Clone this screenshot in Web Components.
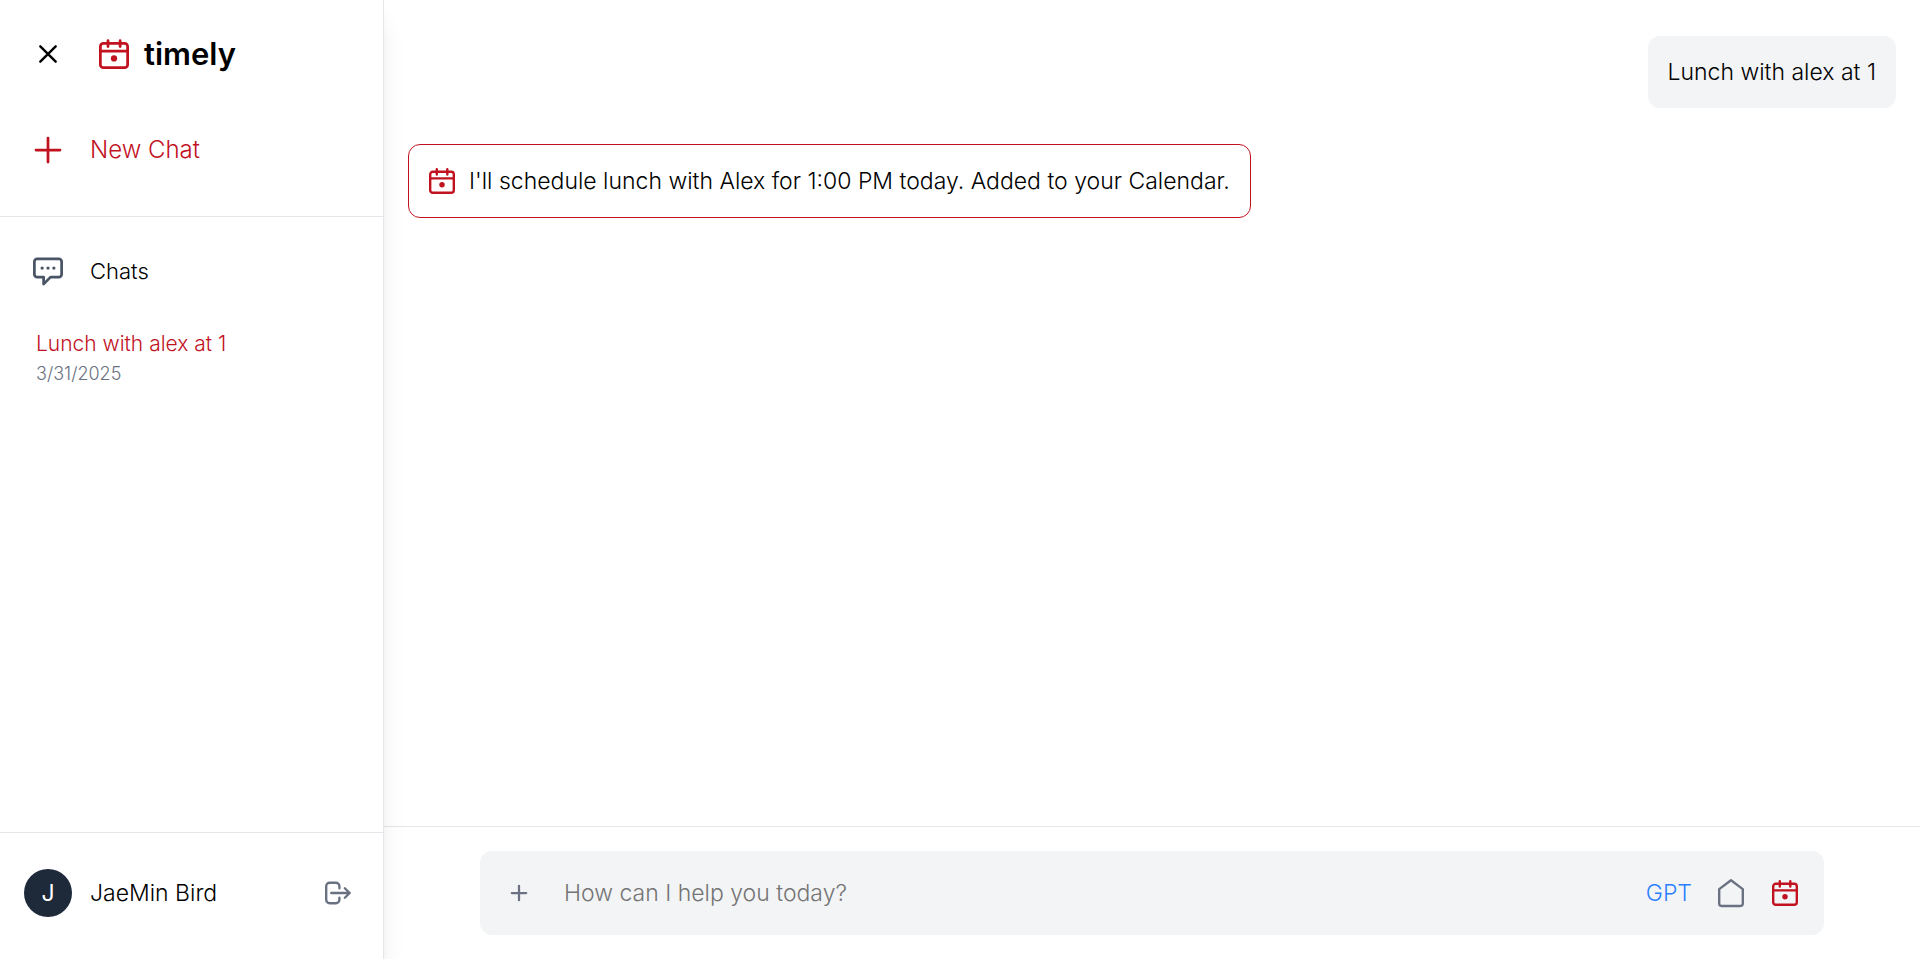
<!DOCTYPE html>
<html lang="en">
<head>
<meta charset="utf-8">
<title>timely</title>
<style>
  html, body { height: 100%; margin: 0; }
  body {
    --red: #c1121f;
    --line: #e5e7eb;
    --panel: #f3f4f6;
    --muted: #6a7282;
    font: 300 23px/36px Inter, "Liberation Sans", sans-serif;
    color: #000;
    background: #fff;
  }
</style>
</head>
<body>
<timely-app></timely-app>
<script>
const ICONS = {
  close: '<path d="M4.300 4.300 19.700 19.700M19.700 4.300 4.300 19.700"/>',
  plus: '<path d="M12 2.400V21.600M2.400 12H21.600"/>',
  calendar: '<rect x="1.100" y="3.500" width="21.800" height="19.400" rx="2.400"/><path d="M1.100 9.600H22.900M7.200 1.200V6M16.900 1.200V6"/><circle cx="12" cy="15.500" r="2.500" fill="currentColor" stroke="none"/>',
  chat: '<path d="M3.300 2.300H20.700A2.200 2.200 0 0 1 22.900 4.500V14.700A2.200 2.200 0 0 1 20.700 16.900H14L8.500 22.500V16.900H3.300A2.200 2.200 0 0 1 1.100 14.700V4.500A2.200 2.200 0 0 1 3.300 2.300Z"/><g fill="currentColor" stroke="none"><circle cx="7.300" cy="9.600" r="1.300"/><circle cx="12" cy="9.600" r="1.300"/><circle cx="16.700" cy="9.600" r="1.300"/></g>',
  logout: '<path d="M13.300 7.600V5.700A3.200 3.200 0 0 0 10.100 2.500H4.300A3.200 3.200 0 0 0 1.100 5.700V18.300A3.200 3.200 0 0 0 4.300 21.500H10.100A3.200 3.200 0 0 0 13.300 18.300V16.400M5.800 12H22.800M18.300 7.600 22.800 12 18.300 16.400"/>',
  home: '<path d="M1.100 8.400 12 .2 22.900 8.400V21.800A2.200 2.200 0 0 1 20.700 24H3.300A2.200 2.200 0 0 1 1.100 21.800Z"/>'
};

const define = (name, css, html) => customElements.define(name, class extends HTMLElement {
  constructor() {
    super();
    const template = document.createElement('template');
    template.innerHTML = `<style>*{box-sizing:border-box}button{font:inherit;color:inherit;background:none;border:0;padding:0;margin:0;cursor:pointer}a{color:inherit;text-decoration:none}${css}</style>${html}`;
    this.attachShadow({ mode: 'open' }).append(template.content.cloneNode(true));
  }
});

customElements.define('t-icon', class extends HTMLElement {
  connectedCallback() {
    const root = this.attachShadow({ mode: 'open' });
    const size = this.getAttribute('size');
    const stroke = this.getAttribute('stroke') || 2.2;
    root.innerHTML = `<style>:host{display:block;flex:none}svg{display:block;overflow:visible}</style>
      <svg aria-hidden="true" width="${size}" height="${size}" viewBox="0 0 24 24" fill="none" stroke="currentColor" stroke-width="${stroke}" stroke-linecap="round" stroke-linejoin="round">${ICONS[this.getAttribute('name')]}</svg>`;
  }
});

define('timely-header', `
  :host { display: flex; align-items: center; padding: 36px 36px 0; }
  button { width: 24px; display: grid; place-items: center; }
  a { display: flex; align-items: center; gap: 15px; margin-left: 39px; font-size: 31px; font-weight: 600; }
  a t-icon { color: var(--red); }
`, `<button aria-label="Close sidebar"><t-icon name="close" size="24" stroke="2.4"></t-icon></button>
    <a href="#"><t-icon name="calendar" size="30"></t-icon><span>timely</span></a>`);

define('new-chat', `
  :host { display: block; padding: 60px 30px 48px; border-bottom: 1px solid var(--line); color: var(--red); font-size: 24px; }
  button { display: flex; align-items: center; gap: 24px; }
  t-icon { padding: 0 3px; }
`, `<button><t-icon name="plus" size="30"></t-icon><span>New Chat</span></button>`);

define('chat-list', `
  :host { display: block; flex: 1; padding: 36px 33px; font-size: 22px; }
  h2 { display: flex; align-items: center; gap: 27px; margin: 0 0 40px; font: inherit; }
  t-icon { color: #4a5565; }
  ul { list-style: none; margin: 0; padding: 0 3px; }
`, `<h2><t-icon name="chat" size="30"></t-icon>Chats</h2><ul><slot></slot></ul>`);

define('chat-link', `
  :host { display: list-item; list-style: none; }
  a { display: block; color: var(--red); font-size: 21px; line-height: 30px; }
  time { display: block; color: var(--muted); font-size: 18px; line-height: 30px; }
`, `<a href="#"><slot></slot><time><slot name="date"></slot></time></a>`);

define('user-bar', `
  :host { display: flex; align-items: center; border-top: 1px solid var(--line); padding: 36px 32px 42px 24px; }
  .avatar { width: 48px; height: 48px; border-radius: 50%; background: #1e2939; color: #fff; display: grid; place-items: center; font-weight: 400; }
  .name { flex: 1; margin-left: 18px; }
  button { color: var(--muted); }
`, `<span class="avatar">J</span><span class="name"><slot></slot></span><button aria-label="Log out"><t-icon name="logout" size="26"></t-icon></button>`);

define('side-bar', `
  :host { display: flex; flex-direction: column; background: #fff; border-right: 1px solid var(--line); box-shadow: 0 20px 25px -5px #0000001a, 0 8px 10px -6px #0000001a; }
`, `<timely-header></timely-header><new-chat></new-chat>
    <chat-list><chat-link>Lunch with alex at 1<span slot="date">3/31/2025</span></chat-link></chat-list>
    <user-bar>JaeMin Bird</user-bar>`);

define('user-message', `
  :host { display: block; align-self: flex-end; padding: 18px 20px; border-radius: 12px; background: var(--panel); }
`, `<slot></slot>`);

define('bot-message', `
  :host { display: flex; align-items: center; gap: 14px; align-self: flex-start; padding: 18px 20px; border: 1px solid var(--red); border-radius: 12px; }
  t-icon { color: var(--red); }
`, `<t-icon name="calendar" size="26"></t-icon><span><slot></slot></span>`);

define('prompt-bar', `
  :host { display: block; border-top: 1px solid var(--line); padding: 24px 6.25%; }
  form { display: flex; align-items: center; background: var(--panel); border-radius: 12px; padding: 24px 26px 24px 30px; }
  input { flex: 1; min-width: 0; height: 36px; border: 0; outline: 0; padding: 0; margin: 0 24px 0 36px; background: none; font: inherit; color: inherit; }
  input::placeholder { color: #757575; opacity: 1; }
  button { color: var(--muted); }
  .model { color: #2b7fff; }
  .home { margin: 0 28px 0 26px; }
  .calendar { color: var(--red); }
`, `<form>
      <button type="button" aria-label="Add attachment"><t-icon name="plus" size="18" stroke="3"></t-icon></button>
      <input type="text" aria-label="Message" placeholder="How can I help you today?">
      <button type="button" class="model">GPT</button>
      <button type="button" class="home" aria-label="Home"><t-icon name="home" size="26"></t-icon></button>
      <button type="button" class="calendar" aria-label="Calendar"><t-icon name="calendar" size="26"></t-icon></button>
    </form>`);

define('chat-view', `
  :host { display: flex; flex-direction: column; min-width: 0; }
  main { flex: 1; display: flex; flex-direction: column; gap: 36px; padding: 36px 24px; }
`, `<main><user-message>Lunch with alex at 1</user-message>
    <bot-message>I'll schedule lunch with Alex for 1:00 PM today. Added to your Calendar.</bot-message></main>
    <prompt-bar></prompt-bar>`);

define('timely-app', `
  :host { display: grid; grid-template-columns: 20% 1fr; min-height: 100%; }
  side-bar { z-index: 1; }
`, `<side-bar></side-bar><chat-view></chat-view>`);
</script>
</body>
</html>
